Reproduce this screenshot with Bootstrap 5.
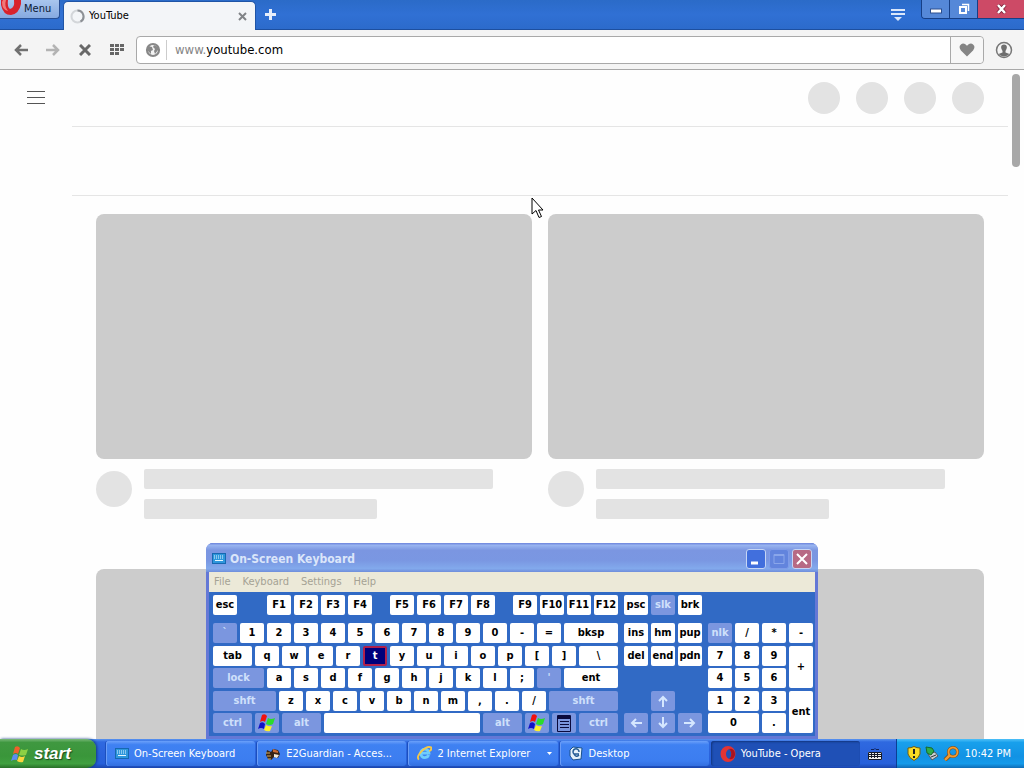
<!DOCTYPE html>
<html lang="en">
<head>
<meta charset="utf-8">
<meta name="viewport" content="width=device-width, initial-scale=1">
<title>YouTube - Opera</title>
<link href="https://cdn.jsdelivr.net/npm/bootstrap@5.3.0/dist/css/bootstrap.min.css" rel="stylesheet">
<style>
body{font:11px/14px "DejaVu Sans Condensed","DejaVu Sans",sans-serif;color:#000;background:#fefefe;overflow:hidden}
button{font:inherit;border:0;background:none;padding:0;color:inherit}
svg{display:block;flex:none}
a{color:inherit;text-decoration:none}
/* browser frame */
.titlebar{height:30px;background:linear-gradient(#2b6bc8,#3070d4 50%,#2c6bcb);border-bottom:1px solid #1d4f9f}
.menu-btn{width:60px;height:19px;background:linear-gradient(#a9c6ee,#86a9e0);border:1px solid #284f94;border-top:0;border-left:0;border-radius:0 0 4px 0;color:#0b1a33;line-height:18px;gap:2px}
.tab{width:193px;height:29px;margin:1px 0 0 3px;background:#f3f5f8;border:1px solid #1f54a6;border-bottom:0;border-radius:5px 5px 0 0;padding:0 8px 0 6px}
.caps{height:19px;border:1px solid #163f86;border-top:0;border-right:0;border-radius:0 0 0 4px;overflow:hidden}
.caps button{width:28px;background:#5588d8;display:flex;align-items:center;justify-content:center;border-right:1px solid #163f86}
.caps button.shut{width:46px;background:#cd4a66;border:0}
.toolbar{height:40px;background:#f4f4f4;border-bottom:1px solid #a8a8a8;padding:0 11px 0 13px}
.toolbar .nav-btn{width:16px;height:16px;display:flex;align-items:center;justify-content:center}
.address{height:28px;margin:0 11px;border:1px solid #a9a9a9;border-radius:4px;background:#fff}
.address .site{width:30px;height:20px;border-right:1px solid #ccc}
.address .heart{width:33px;align-self:stretch;background:#f7f7f7;border-left:1px solid #a9a9a9;border-radius:0 4px 4px 0}
.url{font-size:13px;line-height:18px}
.url span{color:#858585}
/* loading page */
.viewport{min-height:0}
.top-row{height:56px;padding:0 40px 0 27px}
.dot{width:32px;height:32px;background:#e3e3e3}
.rule{margin:0 16px 0 72px;border-bottom:1px solid #e5e5e5}
.chips{height:69px}
.feed{display:grid;grid-template-columns:1fr 1fr;gap:50px 16px;padding:18px 40px 0 96px}
.thumb{aspect-ratio:16/9;background:#ccc;border-radius:8px}
.meta{margin-top:10px;gap:12px}
.avatar{width:36px;height:36px;margin-top:2px;background:#e3e3e3;flex:none}
.lines{display:flex;flex-direction:column;gap:10px}
.bar{width:90%;height:20px;background:#e3e3e3;border-radius:2px}
.bar.short{width:60%}
.scroll-thumb{position:absolute;right:4px;top:4px;width:8px;height:93px;border-radius:4px;background:#a8a8a8}
.pointer{position:absolute;left:531px;top:127px}
/* on-screen keyboard window */
.osk{position:absolute;left:206px;bottom:0;border:3px solid #6478d6;border-top:0;border-radius:7px 7px 0 0;background:#316ac5}
.osk-title{height:29px;margin:0 -3px;padding:2px 6px 0;border-radius:7px 7px 0 0;background:linear-gradient(#6b83dc 0,#98b4f0 8%,#7b96e1 25%,#7a97e2 60%,#82a9ec 88%,#6f8edb);color:#dbe6fa}
.osk-title h2{font:bold 12px/16px "DejaVu Sans Condensed","DejaVu Sans",sans-serif}
.wbtn{width:20px;height:20px;border:1px solid #c5d5f5;border-radius:3px;display:flex;align-items:center;justify-content:center}
.wbtn.min{background:#416fdd}
.wbtn.max{background:#6284dd;border-color:#7f9ce8}
.wbtn.end{background:#b76a84}
.osk-menu{height:20px;background:#ece9d8;color:#a5a294;gap:12px;padding:0 5px}
.keys{padding:3px 2px 3px 4px}
.krow{display:flex;gap:3px}
.key{width:24px;height:20px;background:#fff;border-radius:2px;font-weight:bold;line-height:20px;white-space:nowrap;display:flex;align-items:center;justify-content:center}
.key.dim{background:#7b96df;color:#cfe0fb}
.key.hit{background:#00007b;color:#fff;border:2px solid #b0204c}
.g27{margin-left:27px}.g15{margin-left:15px}.g3{margin-left:3px}
.k39{width:39px}.k51{width:51px}.k54{width:54px}.k63{width:63px}.k69{width:69px}.k156{width:156px}
.main-keys{height:110px}
.pad{display:grid;grid-template-columns:repeat(3,24px);grid-template-rows:repeat(5,20px);align-content:space-between;column-gap:3px;height:110px}
.pad.num{grid-template-columns:repeat(4,24px)}
.pad .key{width:auto}
.pad .tall{height:auto;grid-row:span 2}
.pad .wide{grid-column:span 2}
.up{grid-area:4/2}.left{grid-area:5/1}.down{grid-area:5/2}.right{grid-area:5/3}
/* taskbar */
.taskbar{height:30px;background:linear-gradient(#5a94f0 0,#2f69e0 10%,#2a62dc 50%,#2660da 85%,#1b45ac);color:#fff}
.start{width:96px;background:linear-gradient(#78b878 0,#3f9840 12%,#3a963a 60%,#40a040 85%,#286f28);border-radius:0 9px 9px 0;box-shadow:1px 0 3px #123a80;font:italic bold 17px/24px "Liberation Sans",sans-serif;text-shadow:1px 1px 1px #1d4a1d;padding:0 0 0 11px;gap:5px}
.tasks{gap:2px;padding:2px 0 2px 10px}
.task{flex:1 1 0;min-width:0;height:25px;background:linear-gradient(#6ba0fa 0,#3f81f2 15%,#3c7df0 80%,#336fdf);border-radius:3px;box-shadow:inset 1px 0 #6b9df7,-1px 0 #1c4fbd;padding:0 6px 0 9px;gap:5px;display:flex;align-items:center;text-align:left}
.task.on{background:#1f50b6;box-shadow:inset 1px 1px 2px #12357f}
.lang{width:36px}
.tray{width:128px;background:linear-gradient(#4fc0f8 0,#18a0ec 12%,#1292e4 60%,#149aea 85%,#0f6cb5);border-left:1px solid #0b3f94;padding:0 13px 0 10px;gap:4px}
</style>
</head>
<body class="d-flex flex-column vh-100">
<svg width="0" height="0" class="position-absolute" aria-hidden="true">
  <defs>
    <g id="flag"><path d="M4 1Q7-1 9 2L7 8Q5 6 2 8Z" fill="#f2120c"/><path d="M10 4Q13 6 17 4L15 10Q12 12 8 10Z" fill="#2bdc2b"/><path d="M2 9Q5 7 7 10L6 15Q3 13 0 15Z" fill="#1010c8"/><path d="M8 11Q11 13 14 12L12 17Q9 18 6 16Z" fill="#fff02a"/></g>
    <g id="kbd"><rect x=".5" y="1.500" width="13" height="10" fill="#2e97dc" stroke="#1668b0"/><path d="M2 4h10M2 6h10" stroke="#e6f8ff" stroke-dasharray="1 1"/><path d="M3 8.500h8" stroke="#e6f8ff"/></g>
  </defs>
</svg>

<header>
  <div class="titlebar d-flex">
    <button class="menu-btn d-flex" type="button">
      <svg width="22" height="18" viewBox="0 0 22 18"><path d="M1 0V5Q3 15 11 15Q19 14 21 4V0H14Q15 8 10 9Q7 7 8 0Z" fill="#d8222c"/><path d="M2 2Q2 10 8 11Q4 6 6 0H3Z" fill="#f07878"/></svg>
      <span>Menu</span>
    </button>
    <div class="tab d-flex align-items-center">
      <svg width="15" height="15" viewBox="0 0 15 15" fill="none" stroke-width="2"><circle cx="7.500" cy="7.500" r="6" stroke="#d3d6da"/><path d="M7.500 1.500a6 6 0 0 1 3 11.200" stroke="#8c9096"/></svg>
      <span class="ms-1 flex-grow-1">YouTube</span>
      <button type="button" aria-label="Close tab"><svg width="9" height="9" viewBox="0 0 9 9"><path d="M1 1l7 7M8 1l-7 7" stroke="#808387" stroke-width="2"/></svg></button>
    </div>
    <button type="button" class="ms-2" aria-label="New tab"><svg width="13" height="13" viewBox="0 0 13 13"><path d="M6.500 1v11M1 6.500h11" stroke="#e7eefa" stroke-width="3"/></svg></button>
    <button type="button" class="ms-auto me-3" aria-label="Tab menu"><svg width="14" height="14" viewBox="0 0 14 14"><path d="M0 2h14M0 6h14" stroke="#dce8fa" stroke-width="2"/><path d="M3 9h8l-4 4z" fill="#dce8fa"/></svg></button>
    <div class="caps d-flex">
      <button type="button" aria-label="Minimize"><svg width="12" height="10" viewBox="0 0 12 10"><rect x=".5" y="5" width="11" height="4" fill="#fff" stroke="#2c4f8f"/></svg></button>
      <button type="button" aria-label="Restore"><svg width="12" height="12" viewBox="0 0 12 12" fill="none" stroke="#fff"><path d="M4 1.500h6.500V8" stroke-width="1.500"/><rect x="2" y="4" width="6" height="6" stroke-width="2"/></svg></button>
      <button type="button" class="shut" aria-label="Close"><svg width="11" height="10" viewBox="0 0 11 10"><path d="M2 1l7 8M9 1L2 9" stroke="#7b2038" stroke-width="4"/><path d="M2 1l7 8M9 1L2 9" stroke="#fff" stroke-width="2.500"/></svg></button>
    </div>
  </div>
  <div class="toolbar d-flex align-items-center">
    <button type="button" class="nav-btn" aria-label="Back"><svg width="14" height="12" viewBox="0 0 14 12"><path d="M7 1L2 6l5 5M2 6h12" fill="none" stroke="#707070" stroke-width="2.500"/></svg></button>
    <button type="button" class="nav-btn ms-3" aria-label="Forward"><svg width="14" height="12" viewBox="0 0 14 12"><path d="M7 1l5 5-5 5M12 6H0" fill="none" stroke="#b3b3b3" stroke-width="2.500"/></svg></button>
    <button type="button" class="nav-btn ms-3" aria-label="Stop"><svg width="12" height="12" viewBox="0 0 12 12"><path d="M1 1l10 10M11 1L1 11" stroke="#686868" stroke-width="3"/></svg></button>
    <button type="button" class="nav-btn ms-3" aria-label="Speed Dial"><svg width="14" height="11" viewBox="0 0 14 11"><path d="M0 1.500h14M0 5.500h14M0 9.500h9" stroke="#666" stroke-width="3" stroke-dasharray="4 1"/></svg></button>
    <div class="address d-flex align-items-center flex-grow-1">
      <div class="site d-flex align-items-center ps-2"><svg width="16" height="16" viewBox="0 0 16 16"><circle cx="8" cy="8" r="6" fill="#f4f4f4" stroke="#888" stroke-width="2.200"/><path d="M3 4l4 1 1 3-2 1v3L3 9zM9 3l4 2v3l-3 4-1-3 1-2-2-2z" fill="#888"/></svg></div>
      <a href="#" class="url ms-2"><span>www.</span>youtube.com</a>
      <button type="button" class="heart ms-auto d-flex align-items-center justify-content-center" aria-label="Add to favorites"><svg width="16" height="14" viewBox="0 0 17 15"><path d="M8.500 14.500L2 8Q-1 4 2 1.500T8.500 3Q12-1 15 1.500T15 8Z" fill="#858585"/></svg></button>
    </div>
    <button type="button" aria-label="Account"><svg width="18" height="18" viewBox="0 0 18 18"><circle cx="9" cy="9" r="7.500" fill="#f4f4f4" stroke="#777" stroke-width="1.500"/><path d="M9 3.500c2.500 0 3.500 2 2.500 4.500L10.500 10v1.500l4 1.500A7.500 7.500 0 0 1 3.500 13l4-1.500V10L6.500 8C5.500 5.500 6.500 3.500 9 3.500z" fill="#6e6e6e"/></svg></button>
  </div>
</header>

<main class="viewport flex-grow-1 position-relative overflow-hidden">
  <div class="top-row d-flex align-items-center justify-content-between">
    <button type="button" aria-label="Guide"><svg width="18" height="16" viewBox="0 0 18 16"><path d="M0 1.500h18M0 7.500h18M0 13.500h18" stroke="#555"/></svg></button>
    <div class="d-flex gap-3">
      <div class="dot rounded-circle"></div><div class="dot rounded-circle"></div><div class="dot rounded-circle"></div><div class="dot rounded-circle"></div>
    </div>
  </div>
  <div class="rule"></div>
  <div class="rule chips"></div>
  <div class="feed">
    <div><div class="thumb"></div><div class="meta d-flex"><div class="avatar rounded-circle"></div><div class="lines flex-grow-1"><div class="bar"></div><div class="bar short"></div></div></div></div>
    <div><div class="thumb"></div><div class="meta d-flex"><div class="avatar rounded-circle"></div><div class="lines flex-grow-1"><div class="bar"></div><div class="bar short"></div></div></div></div>
    <div class="thumb"></div>
    <div class="thumb"></div>
  </div>
  <div class="scroll-thumb"></div>
  <svg class="pointer" width="13" height="22" viewBox="0 0 13 22"><path d="M1 1v16l4-3.500 3 7 2.500-1-3-6.500H12z" fill="#fff" stroke="#000"/></svg>

  <section class="osk" aria-label="On-Screen Keyboard">
    <div class="osk-title d-flex align-items-center">
      <svg width="14" height="13" viewBox="0 0 14 13"><use href="#kbd"/></svg>
      <h2 class="mb-0 ms-1">On-Screen Keyboard</h2>
      <div class="d-flex ms-auto" style="gap:3px">
        <button type="button" class="wbtn min" aria-label="Minimize"><svg width="12" height="12" viewBox="0 0 12 12"><path d="M1 10h7" stroke="#fff" stroke-width="3"/></svg></button>
        <button type="button" class="wbtn max" aria-label="Maximize"><svg width="12" height="12" viewBox="0 0 12 12"><path d="M1 1.500h10v9H1z" fill="none" stroke="#8aa6ea"/><path d="M1 2.500h10" stroke="#8aa6ea"/></svg></button>
        <button type="button" class="wbtn end" aria-label="Close"><svg width="12" height="12" viewBox="0 0 12 12"><path d="M1 1l10 10M11 1L1 11" stroke="#fff" stroke-width="2"/></svg></button>
      </div>
    </div>
    <div class="osk-menu d-flex align-items-center"><button type="button">File</button><button type="button">Keyboard</button><button type="button">Settings</button><button type="button">Help</button></div>
    <div class="keys">
      <div class="krow mb-2">
        <button class="key">esc</button>
        <button class="key g27">F1</button><button class="key">F2</button><button class="key">F3</button><button class="key">F4</button>
        <button class="key g15">F5</button><button class="key">F6</button><button class="key">F7</button><button class="key">F8</button>
        <button class="key g15">F9</button><button class="key">F10</button><button class="key">F11</button><button class="key">F12</button>
        <button class="key g3">psc</button><button class="key dim">slk</button><button class="key">brk</button>
      </div>
      <div class="d-flex" style="gap:6px">
        <div class="main-keys d-flex flex-column justify-content-between">
          <div class="krow"><button class="key dim">`</button><button class="key">1</button><button class="key">2</button><button class="key">3</button><button class="key">4</button><button class="key">5</button><button class="key">6</button><button class="key">7</button><button class="key">8</button><button class="key">9</button><button class="key">0</button><button class="key">-</button><button class="key">=</button><button class="key k54">bksp</button></div>
          <div class="krow"><button class="key k39">tab</button><button class="key">q</button><button class="key">w</button><button class="key">e</button><button class="key">r</button><button class="key hit">t</button><button class="key">y</button><button class="key">u</button><button class="key">i</button><button class="key">o</button><button class="key">p</button><button class="key">[</button><button class="key">]</button><button class="key k39">\</button></div>
          <div class="krow"><button class="key dim k51">lock</button><button class="key">a</button><button class="key">s</button><button class="key">d</button><button class="key">f</button><button class="key">g</button><button class="key">h</button><button class="key">j</button><button class="key">k</button><button class="key">l</button><button class="key">;</button><button class="key dim">'</button><button class="key k54">ent</button></div>
          <div class="krow"><button class="key dim k63">shft</button><button class="key">z</button><button class="key">x</button><button class="key">c</button><button class="key">v</button><button class="key">b</button><button class="key">n</button><button class="key">m</button><button class="key">,</button><button class="key">.</button><button class="key">/</button><button class="key dim k69">shft</button></div>
          <div class="krow"><button class="key dim k39">ctrl</button><button class="key dim" aria-label="Windows"><svg width="18" height="18" viewBox="0 0 18 18"><use href="#flag"/></svg></button><button class="key dim k39">alt</button><button class="key k156" aria-label="Space"></button><button class="key dim k39">alt</button><button class="key dim" aria-label="Windows"><svg width="18" height="18" viewBox="0 0 18 18"><use href="#flag"/></svg></button><button class="key dim" aria-label="Menu key"><svg width="14" height="17" viewBox="0 0 14 17" fill="none" stroke="#0a0a3c"><path d="M.5.500h13v16H.5zM0 3.500h14M3 6.500h9M3 9.500h9M3 12.500h9"/><path d="M1 2h12" stroke-width="2"/></svg></button><button class="key dim k39">ctrl</button></div>
        </div>
        <div class="pad">
          <button class="key">ins</button><button class="key">hm</button><button class="key">pup</button>
          <button class="key">del</button><button class="key">end</button><button class="key">pdn</button>
          <button class="key dim up" aria-label="Up"><svg width="12" height="12" viewBox="0 0 12 12" fill="none" stroke="#d5e7ff" stroke-width="2"><path d="M6 12V2M2 6l4-4 4 4"/></svg></button>
          <button class="key dim left" aria-label="Left"><svg width="12" height="12" viewBox="0 0 12 12" fill="none" stroke="#d5e7ff" stroke-width="2"><path d="M12 6H2M6 2L2 6l4 4"/></svg></button>
          <button class="key dim down" aria-label="Down"><svg width="12" height="12" viewBox="0 0 12 12" fill="none" stroke="#d5e7ff" stroke-width="2"><path d="M6 0v10M2 6l4 4 4-4"/></svg></button>
          <button class="key dim right" aria-label="Right"><svg width="12" height="12" viewBox="0 0 12 12" fill="none" stroke="#d5e7ff" stroke-width="2"><path d="M0 6h10M6 2l4 4-4 4"/></svg></button>
        </div>
        <div class="pad num">
          <button class="key dim">nlk</button><button class="key">/</button><button class="key">*</button><button class="key">-</button>
          <button class="key">7</button><button class="key">8</button><button class="key">9</button><button class="key tall">+</button>
          <button class="key">4</button><button class="key">5</button><button class="key">6</button>
          <button class="key">1</button><button class="key">2</button><button class="key">3</button><button class="key tall">ent</button>
          <button class="key wide">0</button><button class="key">.</button>
        </div>
      </div>
    </div>
  </section>
</main>

<footer class="taskbar d-flex">
  <button type="button" class="start d-flex align-items-center"><svg width="18" height="18" viewBox="0 0 18 18"><path d="M4 2Q7 0 9 3L7 9Q5 7 2 9Z" fill="#f0602c"/><path d="M10 4Q13 6 17 4L15 10Q12 11 8 10Z" fill="#8cd044"/><path d="M2 10Q5 8 7 10L6 15Q3 14 0 16Z" fill="#5c8df0"/><path d="M8 11Q11 13 14 11L12 17Q9 18 6 16Z" fill="#fbd53e"/></svg>start</button>
  <div class="tasks d-flex flex-grow-1 align-items-end">
    <button type="button" class="task"><svg width="14" height="13" viewBox="0 0 14 13"><use href="#kbd"/></svg><span>On-Screen Keyboard</span></button>
    <button type="button" class="task"><svg width="15" height="14" viewBox="0 0 15 14"><path d="M1 3l4 2 2-3 5 1 2 4-2 4-4-1-3 3-3-1-2-4z" fill="#382416"/><path d="M7 2l5 2v2L7 5z" fill="#c86a34"/><path d="M8 7l5 1-2 3-3-1z" fill="#f3ead8"/><path d="M0 6h4M1 9h4M2 12h3" stroke="#d8ab58"/></svg><span>E2Guardian - Acces...</span></button>
    <button type="button" class="task"><svg width="15" height="15" viewBox="0 0 16 15" fill="none"><path d="M12.500 9a4.500 4.500 0 1 1 .3-2H4" stroke="#6fcdfb" stroke-width="3"/><path d="M2 14Q-1 11 5 5T15 1Q16 4 13 5" stroke="#f3c84a" stroke-width="2"/></svg><span class="flex-grow-1">2 Internet Explorer</span><svg width="5" height="3" viewBox="0 0 5 3"><path d="M0 0h5L2.500 3z" fill="#fff"/></svg></button>
    <button type="button" class="task"><svg width="15" height="15" viewBox="0 0 15 15"><path d="M4 1l9 1-1 11-8 1-3-4V4z" fill="#e4f2fb" stroke="#18508c"/><path d="M10 8H5a3 3 0 1 1 5-2M5 8q2 4 5 1" fill="none" stroke="#245c94" stroke-width="1.500"/></svg><span>Desktop</span></button>
    <button type="button" class="task on"><svg width="16" height="16" viewBox="0 0 16 16"><path d="M8 0a7.500 8 0 1 0 0 16A7.500 8 0 1 0 8 0zm1 3c3 2 3 8 0 10-4-2-4-8 0-10z" fill="#e33434" fill-rule="evenodd"/><path d="M9 13c3-2 3-8 0-10 4-1 6 2 6 5s-2 6-6 5z" fill="#a91420"/></svg><span>YouTube - Opera</span></button>
  </div>
  <button type="button" class="lang px-2" aria-label="Language bar"><svg width="14" height="13" viewBox="0 0 14 13"><path d="M3 2.500h3l1-1 1 1h3" fill="none" stroke="#10235c"/><rect y="5" width="14" height="8" fill="#f0f0f0"/><path d="M.5 5.500h13v7H.5zM0 7.500h14M0 9.500h14M3.500 5v6M6.500 5v6M9.500 5v6" fill="none" stroke="#151a28"/></svg></button>
  <div class="tray d-flex align-items-center">
    <svg width="14" height="15" viewBox="0 0 14 15"><path d="M7 .5Q10 2 13 2V8Q12 12 7 14.500Q2 12 1 8V2Q4 2 7 .5z" fill="#fadb24" stroke="#715d10"/><path d="M7 3v5M7 10v2" stroke="#222" stroke-width="2"/></svg>
    <svg width="14" height="15" viewBox="0 0 14 15"><path d="M3 8l7-2 3 4-6 4z" fill="#c9ced2" stroke="#505a60"/><path d="M6 11l5-2" stroke="#333"/><path d="M1 1l6 1 2 3-3 4-4-2z" fill="#2fae4a" stroke="#176a2c"/></svg>
    <svg width="17" height="15" viewBox="0 0 17 15" fill="none"><circle cx="10" cy="6" r="4.500" stroke="#7a4510" stroke-width="3"/><path d="M7 9l-5 5" stroke="#7a4510" stroke-width="4"/><circle cx="10" cy="6" r="4.500" stroke="#f09a30" stroke-width="2"/><path d="M7 9l-5 5" stroke="#f09a30" stroke-width="2.500"/></svg>
    <span class="ms-auto text-nowrap">10:42 PM</span>
  </div>
</footer>
<script src="https://cdn.jsdelivr.net/npm/bootstrap@5.3.0/dist/js/bootstrap.bundle.min.js"></script>
</body>
</html>
